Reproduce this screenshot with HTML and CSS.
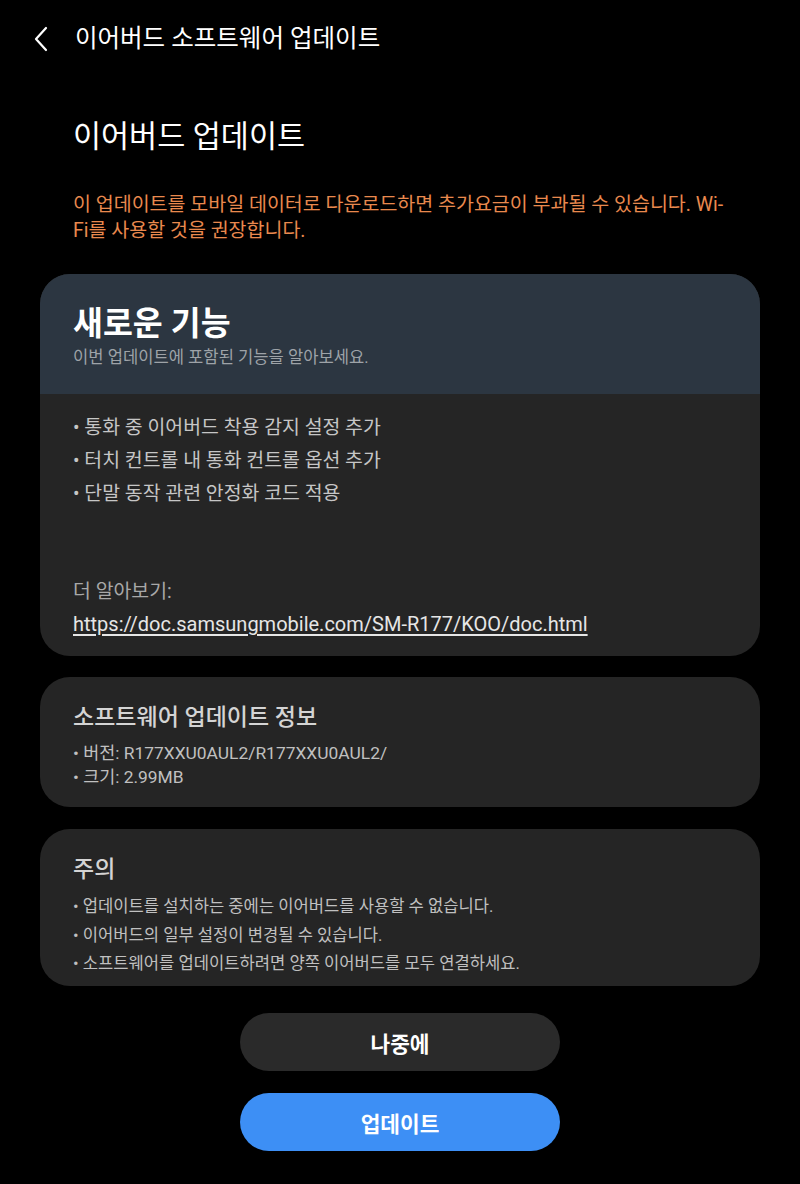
FILE: index.html
```html
<!DOCTYPE html>
<html lang="ko">
<head>
<meta charset="utf-8">
<title>이어버드 소프트웨어 업데이트</title>
<link rel="stylesheet" href="styles.css">
</head>
<body>
<header class="appbar">
  <span class="back">
    <svg width="20" height="28" viewBox="0 0 20 28"><path d="M14 3 L4 14 L14 25" fill="none" stroke="#ffffff" stroke-width="2.2" stroke-linecap="round" stroke-linejoin="round"/></svg>
  </span>
  <span class="appbar-title">이어버드 소프트웨어 업데이트</span>
</header>
<main class="content">
  <h1 class="page-title">이어버드 업데이트</h1>
  <p class="warning">이 업데이트를 모바일 데이터로 다운로드하면 추가요금이 부과될 수 있습니다. Wi-Fi를 사용할 것을 권장합니다.</p>

  <section class="card card-features">
    <div class="card-head">
      <h2 class="feat-title">새로운 기능</h2>
      <p class="feat-sub">이번 업데이트에 포함된 기능을 알아보세요.</p>
    </div>
    <div class="card-body">
      <ul class="feat-list">
        <li>• 통화 중 이어버드 착용 감지 설정 추가</li>
        <li>• 터치 컨트롤 내 통화 컨트롤 옵션 추가</li>
        <li>• 단말 동작 관련 안정화 코드 적용</li>
      </ul>
      <p class="more">더 알아보기:</p>
      <p class="link">https://doc.samsungmobile.com/SM-R177/KOO/doc.html</p>
    </div>
  </section>

  <section class="card card-info">
    <h3 class="card-title">소프트웨어 업데이트 정보</h3>
    <ul class="info-list">
      <li>• 버전: R177XXU0AUL2/R177XXU0AUL2/</li>
      <li>• 크기: 2.99MB</li>
    </ul>
  </section>

  <section class="card card-notice">
    <h3 class="card-title">주의</h3>
    <ul class="notice-list">
      <li>• 업데이트를 설치하는 중에는 이어버드를 사용할 수 없습니다.</li>
      <li>• 이어버드의 일부 설정이 변경될 수 있습니다.</li>
      <li>• 소프트웨어를 업데이트하려면 양쪽 이어버드를 모두 연결하세요.</li>
    </ul>
  </section>

  <div class="actions">
    <button class="btn btn-later">나중에</button>
    <button class="btn btn-update">업데이트</button>
  </div>
</main>
</body>
</html>
```

FILE: styles.css
```css
* { box-sizing: border-box; }
html, body {
  margin: 0;
  padding: 0;
  background: #000000;
}
body {
  width: 800px;
  height: 1184px;
  overflow: hidden;
  font-family: "Roboto", "Noto Sans CJK KR", sans-serif;
  color: #ffffff;
}
p, h1, h2, h3, ul { margin: 0; padding: 0; }
ul { list-style: none; }

.appbar {
  height: 78px;
  display: flex;
  align-items: center;
  padding-left: 32px;
}
.back {
  display: flex;
  width: 43px;
}
.appbar-title {
  font-size: 24.5px;
  line-height: 32px;
  font-weight: 400;
  color: #ffffff;
}

.content {
  padding: 0 40px;
}
.page-title {
  margin-top: 39px;
  padding-left: 33px;
  font-size: 30.5px;
  line-height: 40px;
  font-weight: 400;
  color: #ffffff;
}
.warning {
  margin-top: 35px;
  padding: 0 33px;
  font-size: 19.5px;
  line-height: 26px;
  color: #e9894e;
}

.card {
  background: #252525;
  border-radius: 30px;
  overflow: hidden;
}
.card-features { margin-top: 30px; }
.card-head {
  background: #2c3641;
  padding: 30px 33px 24px;
  height: 120px;
}
.feat-title {
  font-size: 32.5px;
  line-height: 40px;
  font-weight: 700;
  color: #ffffff;
}
.feat-sub {
  margin-top: 2px;
  font-size: 16.6px;
  line-height: 24px;
  color: #9ea3a8;
}
.card-body {
  padding: 17px 33px 16px;
}
.feat-list li {
  font-size: 19.4px;
  line-height: 33px;
  color: #c6c6c6;
}
.more {
  margin-top: 66px;
  font-size: 19.4px;
  line-height: 32px;
  color: #a8a8a8;
}
.link {
  font-size: 20px;
  line-height: 32px;
  color: #e6e6e6;
  text-decoration: underline;
  text-underline-offset: 3px;
}

.card-info {
  margin-top: 21px;
  height: 130px;
  padding: 25px 33px 0;
}
.card-title {
  font-size: 23px;
  line-height: 32px;
  font-weight: 500;
  color: #d4d4d4;
}
.info-list { margin-top: 7px; }
.info-list li {
  font-size: 17.4px;
  line-height: 24px;
  color: #c0c0c0;
}

.card-notice {
  margin-top: 22px;
  height: 157px;
  padding: 25px 33px 0;
}
.notice-list { margin-top: 7px; }
.notice-list li {
  font-size: 16.6px;
  line-height: 28.5px;
  color: #c0c0c0;
}

.actions {
  margin-top: 27px;
  display: flex;
  flex-direction: column;
  align-items: center;
  gap: 22px;
}
.btn {
  width: 320px;
  height: 58px;
  border: none;
  border-radius: 29px;
  font-family: "Roboto", "Noto Sans CJK KR", sans-serif;
  font-size: 21.4px;
  font-weight: 700;
  color: #ffffff;
}
.btn-later { background: #2a2a2a; }
.btn-update { background: #3d8ff5; }
```
